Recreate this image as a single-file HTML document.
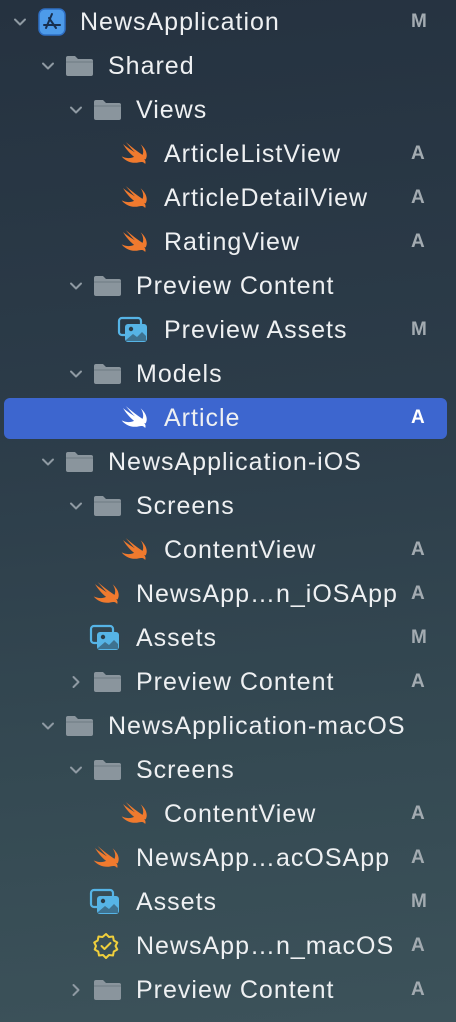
<!DOCTYPE html>
<html><head><meta charset="utf-8"><style>
html,body{margin:0;padding:0}
body{width:456px;height:1022px;overflow:hidden;position:relative;background:linear-gradient(175deg,#253240 0%,#2c3c49 40%,#354a53 75%,#3c525a 100%);font-family:"Liberation Sans",sans-serif;}
.row{position:absolute;left:0;width:456px;height:44px}
.sel{position:absolute;left:4px;top:398px;width:443px;height:41px;background:#3d66cf;border-radius:6px}
.t{position:absolute;top:8px;font-size:25px;color:#eef0f2;white-space:nowrap;letter-spacing:1px}
.b{position:absolute;left:411px;top:11px;font-size:19px;font-weight:bold;color:#a3abb1}
svg{position:absolute}
</style></head><body>
<div class="sel"></div>
<div id="c"></div>
<script>
var rows=[
[0,'d','app','NewsApplication','M'],
[1,'d','f','Shared',''],
[2,'d','f','Views',''],
[3,'','s','ArticleListView','A'],
[3,'','s','ArticleDetailView','A'],
[3,'','s','RatingView','A'],
[2,'d','f','Preview Content',''],
[3,'','img','Preview Assets','M'],
[2,'d','f','Models',''],
[3,'','sw','Article','A'],
[1,'d','f','NewsApplication-iOS',''],
[2,'d','f','Screens',''],
[3,'','s','ContentView','A'],
[2,'','s','NewsApp…n_iOSApp','A'],
[2,'','img','Assets','M'],
[2,'r','f','Preview Content','A'],
[1,'d','f','NewsApplication-macOS',''],
[2,'d','f','Screens',''],
[3,'','s','ContentView','A'],
[2,'','s','NewsApp…acOSApp','A'],
[2,'','img','Assets','M'],
[2,'','ent','NewsApp…n_macOS','A'],
[2,'r','f','Preview Content','A']];
var swift='M20 16c1.6-2.8 1-7-3.8-11.3 2.1 3 2.4 6 1.4 8C13.5 10 9 6.5 5 3c2.7 3.2 5 5.8 7 7.8-2.7-1.6-6.3-4-9-6.2C5.8 9 8.5 12 11.3 14.2 8.8 15.5 5.2 15.4 2 13.8c2.4 3.2 6.3 4.8 10 4.8 2.6 0 4.2-1 5.8-.5.9.3 1.5.9 1.8 1.5.5-1.4.4-2.6-.7-3.8z';
var h='';
rows.forEach(function(r,i){
 var L=r[0],y=i*44,x=80+L*28;
 var s='<div class="row" style="top:'+y+'px">';
 var cx=x-68;
 if(r[1]=='d')s+='<svg style="left:'+cx+'px;top:14px" width="16" height="16" viewBox="0 0 16 16"><path d="M3 5.5l5 5 5-5" fill="none" stroke="#8f9aa3" stroke-width="2" stroke-linecap="round" stroke-linejoin="round"/></svg>';
 if(r[1]=='r')s+='<svg style="left:'+cx+'px;top:14px" width="16" height="16" viewBox="0 0 16 16"><path d="M5.5 3l5 5-5 5" fill="none" stroke="#8f9aa3" stroke-width="2" stroke-linecap="round" stroke-linejoin="round"/></svg>';
 var ix=x-44;
 if(L==0){s+='<svg style="left:38px;top:8px" width="28" height="28" viewBox="0 0 28 28"><rect x="1" y="1" width="26" height="26" rx="6" fill="#4d9be9" stroke="#2f6fc4" stroke-width="1.5"/><path d="M14 6L8 20M11 10l7 10M6 17h16" stroke="#17304f" stroke-width="2" stroke-linecap="round" fill="none"/></svg>';}
 else if(r[2]=='f')s+='<svg style="left:'+(ix+1)+'px;top:11px" width="29" height="22" viewBox="0 0 29 22"><path d="M1 3a2 2 0 0 1 2-2h7l3 3h13a2 2 0 0 1 2 2v13a2 2 0 0 1-2 2H3a2 2 0 0 1-2-2z" fill="#8a959d"/><path d="M1 7h27" stroke="#6f7a82" stroke-width="1"/></svg>';
 else if(r[2]=='s'||r[2]=='sw'){var col=r[2]=='s'?'#f07a2e':'#fff';s+='<svg style="left:'+(ix-1)+'px;top:6px" width="32" height="32" viewBox="0 0 24 24"><path d="'+swift+'" fill="'+col+'"/></svg>';}
 else if(r[2]=='img')s+='<svg style="left:'+(ix-3)+'px;top:8px" width="32" height="28" viewBox="0 0 32 28"><rect x="2" y="2" width="22" height="17" rx="3" fill="none" stroke="#56b4e6" stroke-width="2.2"/><rect x="8" y="8" width="22" height="18" rx="3" fill="#56b4e6"/><circle cx="14" cy="13" r="2.2" fill="#2b3d48"/><path d="M9 24l7-6 4 3 5-5 4 4v5H9z" fill="#2b3d48" opacity=".55"/></svg>';
 else if(r[2]=='ent')s+='<svg style="left:'+(ix)+'px;top:8px" width="28" height="28" viewBox="0 0 28 28"><path d="M14 2l3 3 4-.5.8 4 3.5 2-1.8 3.5 1.8 3.5-3.5 2-.8 4-4-.5-3 3-3-3-4 .5-.8-4-3.5-2L4 14 2.2 10.5l3.5-2 .8-4 4 .5z" fill="none" stroke="#f0cf3c" stroke-width="2" stroke-linejoin="round"/><path d="M9.5 14l3 3 6-6" fill="none" stroke="#f0cf3c" stroke-width="2" stroke-linecap="round" stroke-linejoin="round"/></svg>';
 s+='<div class="t" style="left:'+x+'px">'+r[3]+'</div>';
 if(r[4])s+='<div class="b"'+(i==9?' style="color:#fff"':'')+'>'+r[4]+'</div>';
 h+=s+'</div>';
});
document.getElementById('c').innerHTML=h;
</script>
</body></html>
